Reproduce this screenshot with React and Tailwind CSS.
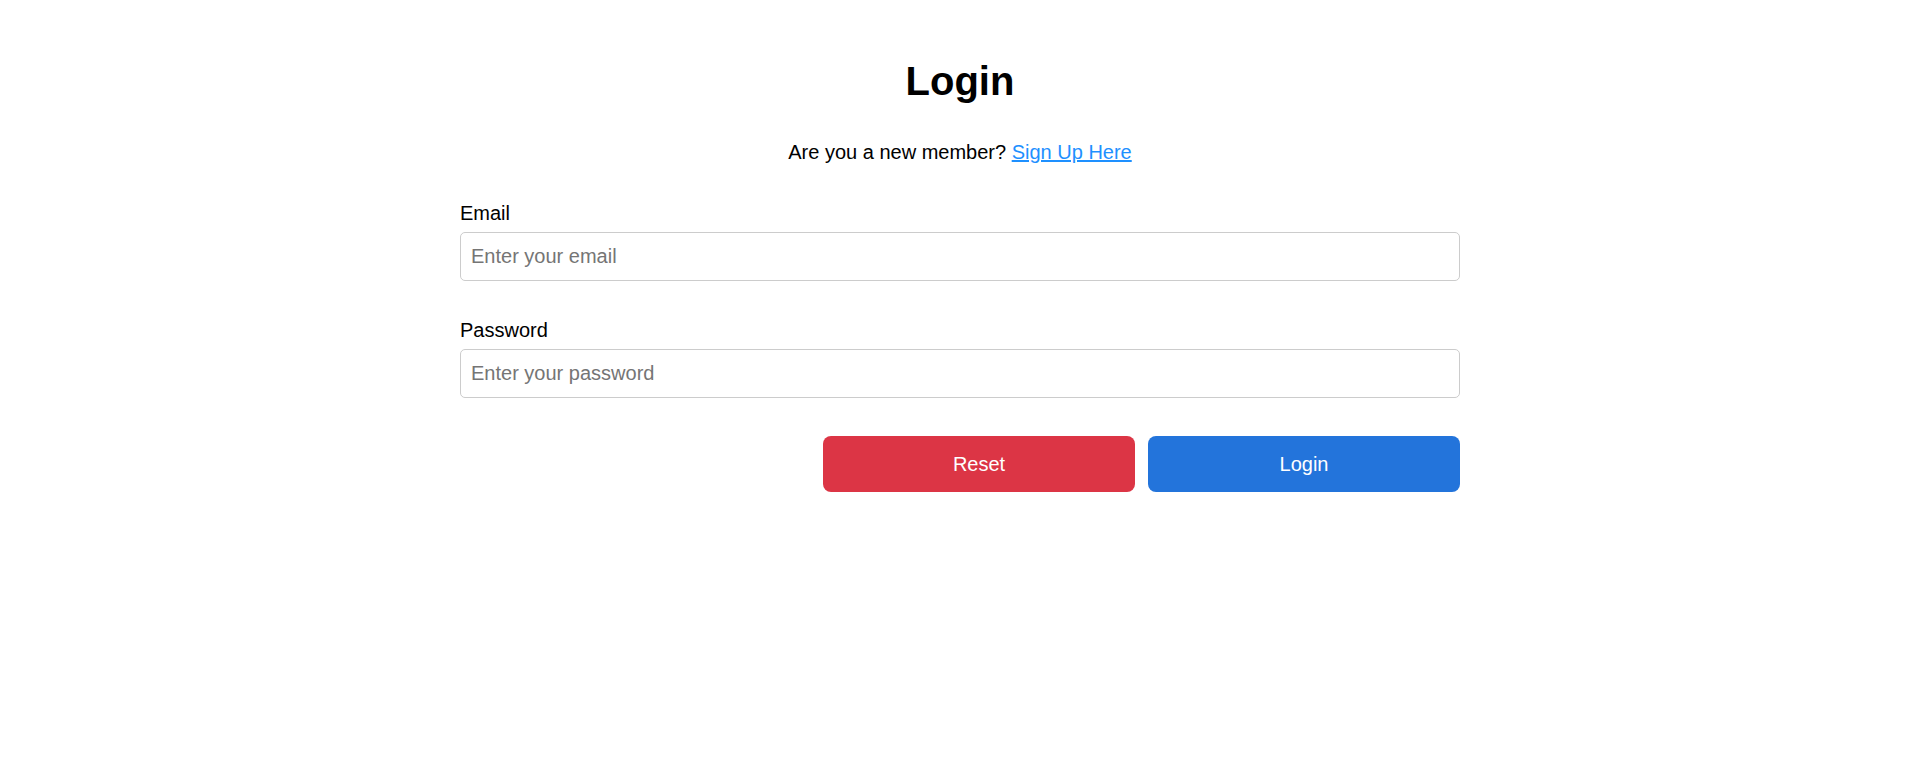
import React, { useState } from "react";

const App = () => {
    const [form, setForm] = useState({ email: "", password: "" });

    const handleChange = (e) => {
        setForm((prev) => ({ ...prev, [e.target.name]: e.target.value }));
    };

    const handleReset = () => {
        setForm({ email: "", password: "" });
    };

    const handleSubmit = (e) => {
        e.preventDefault();
    };

    return (
        <div className="min-h-screen bg-white font-['Liberation_Sans',Arial,sans-serif] text-black flex justify-center pl-[2px]">
            <div className="w-[1000px] pt-[58px]">
                <h1 className="text-[40px] leading-[46px] font-bold text-center">Login</h1>
                <p className="mt-[37px] text-[20px] leading-[23px] text-center">
                    Are you a new member?{" "}
                    <a href="#" className="text-[#1e90ff] underline">Sign Up Here</a>
                </p>

                <form className="mt-[38px] flex flex-col gap-[38px]" onSubmit={handleSubmit}>
                    <div className="flex flex-col">
                        <label htmlFor="email" className="text-[20px] leading-[23px] mb-[7px]">Email</label>
                        <input
                            id="email"
                            type="email"
                            name="email"
                            value={form.email}
                            onChange={handleChange}
                            placeholder="Enter your email"
                            className="h-[49px] border border-[#cccccc] rounded-[5px] px-[10px] text-[20px] placeholder:text-[#757575] outline-none"
                        />
                    </div>
                    <div className="flex flex-col">
                        <label htmlFor="password" className="text-[20px] leading-[23px] mb-[7px]">Password</label>
                        <input
                            id="password"
                            type="password"
                            name="password"
                            value={form.password}
                            onChange={handleChange}
                            placeholder="Enter your password"
                            className="h-[49px] border border-[#cccccc] rounded-[5px] px-[10px] text-[20px] placeholder:text-[#757575] outline-none"
                        />
                    </div>
                    <div className="flex justify-end gap-[13px]">
                        <button
                            type="button"
                            onClick={handleReset}
                            className="w-[312px] h-[56px] rounded-lg bg-[#dc3545] text-white text-[20px] cursor-pointer"
                        >Reset</button>
                        <button
                            type="submit"
                            className="w-[312px] h-[56px] rounded-lg bg-[#2374db] text-white text-[20px] cursor-pointer"
                        >Login</button>
                    </div>
                </form>
            </div>
        </div>
    )
}

export default App
